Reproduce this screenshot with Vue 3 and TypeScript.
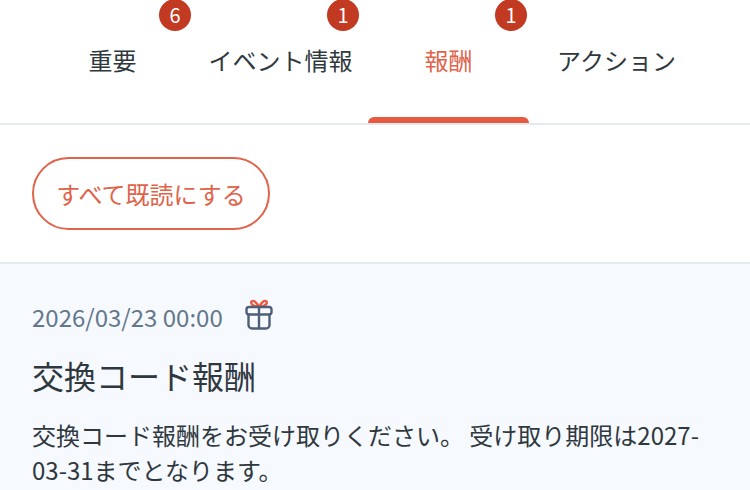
<script setup lang="ts">
const tabs = [
  { label: '重要', badge: 6 },
  { label: 'イベント情報', badge: 1 },
  { label: '報酬', badge: 1, active: true },
  { label: 'アクション', badge: 0 },
]
</script>

<template>
  <div class="page">
    <nav class="tabs">
      <div v-for="t in tabs" :key="t.label" class="tab" :class="{ active: t.active }">
        <span class="label">{{ t.label }}</span>
        <span v-if="t.badge" class="badge">{{ t.badge }}</span>
      </div>
    </nav>
    <div class="actions">
      <button class="read-all">すべて既読にする</button>
    </div>
    <article class="item">
      <div class="meta">
        <span class="date">2026/03/23 00:00</span>
        <svg class="gift" width="28" height="31" viewBox="0 0 28 31" fill="none" stroke="#4f5f78" stroke-width="2.4" stroke-linejoin="round" stroke-linecap="round">
          <path d="M14 8C12 3.500 8.500 1 6.800 2.200S6.500 7.500 14 8ZM14 8c2-4.500 5.500-7 7.200-5.800S21.500 7.500 14 8Z" stroke="#ea5a45" />
          <rect x="1.500" y="8" width="25" height="7.500" rx="2.500" />
          <path d="M3.500 15.500V26a3.500 3.500 0 0 0 3.500 3.500h14a3.500 3.500 0 0 0 3.500-3.500V15.500M14 8v21.500" />
        </svg>
      </div>
      <h2 class="title">交換コード報酬</h2>
      <p class="body">交換コード報酬をお受け取りください。 受け取り期限は2027-03-31までとなります。</p>
    </article>
  </div>
</template>

<style>
html, body { margin: 0; background: #fff; }
</style>

<style scoped>
.page {
  width: 750px;
  height: 490px;
  overflow: hidden;
  font-family: "Noto Sans CJK JP", "Noto Sans", sans-serif;
  color: #2f383d;
  background: #fff;
}
.tabs {
  display: grid;
  grid-template-columns: repeat(4, 161px);
  column-gap: 7px;
  padding-left: 32px;
  height: 123px;
  border-bottom: 2px solid #e6e9f1;
}
.tab {
  position: relative;
  display: flex;
  justify-content: center;
  padding-top: 42px;
  font-size: 24px;
  line-height: 36px;
}
.tab.active { color: #e0634a; }
.tab.active::after {
  content: "";
  position: absolute;
  left: 0;
  right: 0;
  bottom: 0;
  height: 6px;
  border-radius: 6px 6px 0 0;
  background: #e65a40;
}
.badge {
  position: absolute;
  top: -1px;
  right: 2px;
  width: 32px;
  height: 32px;
  border-radius: 50%;
  background: #c23a22;
  color: #fff;
  font-size: 20px;
  line-height: 32px;
  text-align: center;
}
.actions {
  padding: 32px 32px 32px;
  border-bottom: 2px solid #e6e9ee;
}
.read-all {
  display: block;
  height: 73px;
  width: 238px;
  padding: 0;
  border: 2px solid #e0634a;
  border-radius: 37px;
  background: #fff;
  color: #e0634a;
  font: inherit;
  font-size: 24px;
}
.item {
  background: #f6f9fd;
  padding: 34px 32px 0;
  height: 240px;
}
.meta {
  display: flex;
  align-items: center;
  gap: 22px;
  height: 36px;
}
.gift { margin-top: -3px; }
.date {
  font-size: 24px;
  color: #63788c;
}
.title {
  margin: 17px 0 0;
  font-size: 32px;
  font-weight: 400;
  line-height: 48px;
}
.body {
  margin: 18px 0 0;
  font-size: 24px;
  line-height: 35px;
}
</style>
